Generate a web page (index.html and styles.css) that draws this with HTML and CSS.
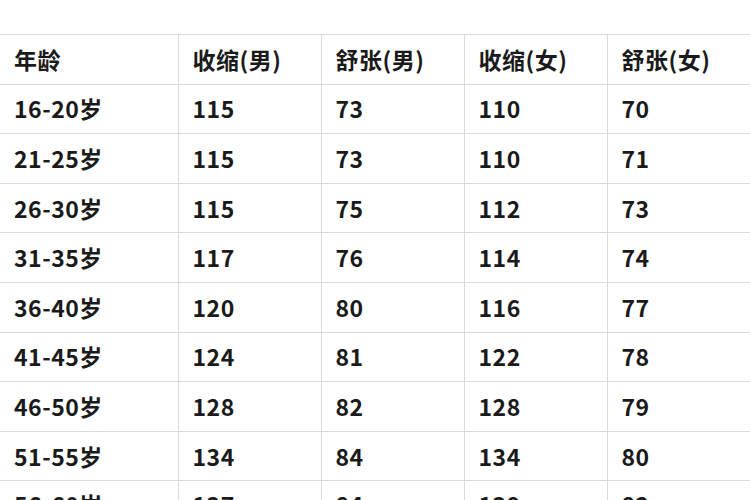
FILE: index.html
```html
<!DOCTYPE html>
<html lang="zh">
<head>
<meta charset="utf-8">
<link rel="stylesheet" href="styles.css">
</head>
<body>
<div class="page">
<table class="bp">
<colgroup><col class="c1"><col class="cn"><col class="cn"><col class="cn"><col class="cn"></colgroup>
<thead>
<tr><th>年龄</th><th>收缩(男)</th><th>舒张(男)</th><th>收缩(女)</th><th>舒张(女)</th></tr>
</thead>
<tbody>
<tr><td>16-20岁</td><td>115</td><td>73</td><td>110</td><td>70</td></tr>
<tr><td>21-25岁</td><td>115</td><td>73</td><td>110</td><td>71</td></tr>
<tr><td>26-30岁</td><td>115</td><td>75</td><td>112</td><td>73</td></tr>
<tr><td>31-35岁</td><td>117</td><td>76</td><td>114</td><td>74</td></tr>
<tr><td>36-40岁</td><td>120</td><td>80</td><td>116</td><td>77</td></tr>
<tr><td>41-45岁</td><td>124</td><td>81</td><td>122</td><td>78</td></tr>
<tr><td>46-50岁</td><td>128</td><td>82</td><td>128</td><td>79</td></tr>
<tr><td>51-55岁</td><td>134</td><td>84</td><td>134</td><td>80</td></tr>
<tr class="partial"><td>56-60岁</td><td>137</td><td>84</td><td>139</td><td>82</td></tr>
</tbody>
</table>
</div>
</body>
</html>
```
FILE: styles.css
```css
html, body {
  margin: 0;
  padding: 0;
  background: #ffffff;
}
.page {
  width: 750px;
  height: 500px;
  overflow: hidden;
  padding-top: 34px;
  box-sizing: border-box;
}
.bp {
  border-collapse: collapse;
  table-layout: fixed;
  width: 750px;
  font-family: "Noto Sans CJK SC", "Noto Sans", sans-serif;
  font-size: 23px;
  font-weight: 600;
  letter-spacing: 0.5px;
  color: #1a1a1a;
}
.c1 { width: 178px; }
.cn { width: 143px; }
.bp th, .bp td {
  height: 49.6px;
  box-sizing: border-box;
  padding: 0 0 0 14px;
  text-align: left;
  vertical-align: middle;
  border-top: 1px solid #dadada;
  border-left: 1px solid #dadada;
  line-height: 1;
}
.bp th { font-weight: 600; }
.bp th:first-child, .bp td:first-child { border-left: none; }
.partial td { vertical-align: top; padding-top: 12px; }
```
